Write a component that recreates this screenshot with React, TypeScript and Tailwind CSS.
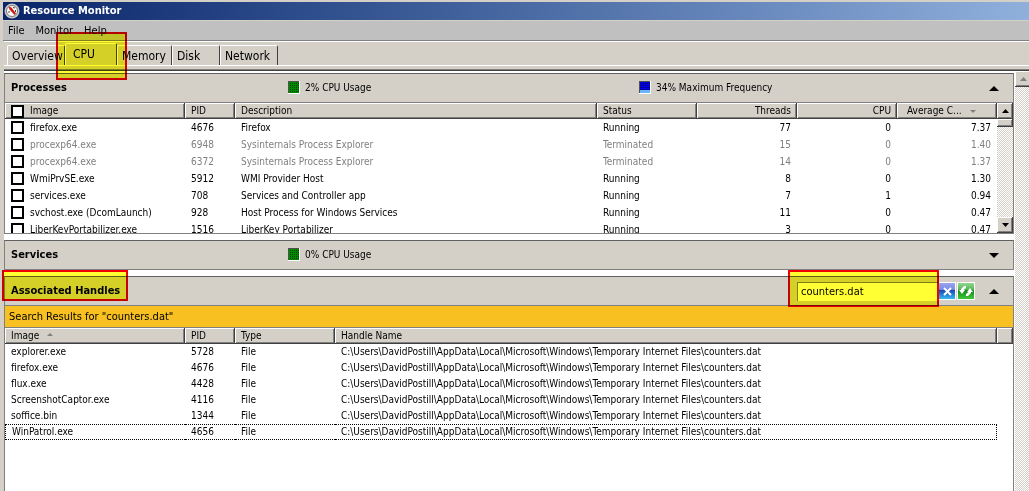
import React, { useState } from "react";

interface ProcessRow {
	image: string;
	pid: number;
	description: string;
	status: "Running" | "Terminated";
	threads: number;
	cpu: number;
	average: string;
}

interface HandleRow {
	image: string;
	pid: number;
}

const processes: ProcessRow[] = [
	{ image: "firefox.exe", pid: 4676, description: "Firefox", status: "Running", threads: 77, cpu: 0, average: "7.37" },
	{ image: "procexp64.exe", pid: 6948, description: "Sysinternals Process Explorer", status: "Terminated", threads: 15, cpu: 0, average: "1.40" },
	{ image: "procexp64.exe", pid: 6372, description: "Sysinternals Process Explorer", status: "Terminated", threads: 14, cpu: 0, average: "1.37" },
	{ image: "WmiPrvSE.exe", pid: 5912, description: "WMI Provider Host", status: "Running", threads: 8, cpu: 0, average: "1.30" },
	{ image: "services.exe", pid: 708, description: "Services and Controller app", status: "Running", threads: 7, cpu: 1, average: "0.94" },
	{ image: "svchost.exe (DcomLaunch)", pid: 928, description: "Host Process for Windows Services", status: "Running", threads: 11, cpu: 0, average: "0.47" },
	{ image: "LiberKeyPortabilizer.exe", pid: 1516, description: "LiberKey Portabilizer", status: "Running", threads: 3, cpu: 0, average: "0.47" },
];

const handles: HandleRow[] = [
	{ image: "explorer.exe", pid: 5728 },
	{ image: "firefox.exe", pid: 4676 },
	{ image: "flux.exe", pid: 4428 },
	{ image: "ScreenshotCaptor.exe", pid: 4116 },
	{ image: "soffice.bin", pid: 1344 },
	{ image: "WinPatrol.exe", pid: 4656 },
];

const handleName =
	"C:\\Users\\DavidPostill\\AppData\\Local\\Microsoft\\Windows\\Temporary Internet Files\\counters.dat";

const tabs = [
	{ name: "Overview", width: "w-[58px]" },
	{ name: "CPU", width: "w-[52px]" },
	{ name: "Memory", width: "w-[55px]" },
	{ name: "Disk", width: "w-[48px]" },
	{ name: "Network", width: "w-[58px]" },
];

const raised =
	"bg-[#d4d0c8] shadow-[inset_-1px_-1px_#404040,inset_1px_1px_#fff,inset_-2px_-2px_#808080]";
const headerCell =
	"h-4 truncate px-1.5 py-0 text-left font-normal leading-4 bg-[#d4d0c8] shadow-[inset_-1px_-1px_#404040,inset_1px_1px_#fff,inset_-2px_-2px_#808080]";
const headerCellRight =
	"h-4 truncate px-1.5 py-0 text-right font-normal leading-4 bg-[#d4d0c8] shadow-[inset_-1px_-1px_#404040,inset_1px_1px_#fff,inset_-2px_-2px_#808080]";
const dither =
	"bg-[repeating-conic-gradient(#d4d0c8_0_25%,#fff_0_50%)] bg-[length:2px_2px]";
const checkbox =
	"block size-[13px] shrink-0 appearance-none border-2 border-black bg-white checked:bg-black";

// Yellow marker with a red frame, laid over the thing it points at
const Marker = ({ className }: { className: string }) => (
	<span
		className={`pointer-events-none absolute z-10 border-2 border-[#f00000] bg-[#ffff33] mix-blend-multiply ${className}`}
	/>
);

const Triangle = ({ down, className = "" }: { down?: boolean; className?: string }) => (
	<svg viewBox="0 0 10 5" className={className} fill="currentColor" preserveAspectRatio="none" aria-hidden="true">
		<path d={down ? "M0 0h10L5 5z" : "M0 5h10L5 0z"} />
	</svg>
);

const Meter = ({ kind, children }: { kind: "usage" | "frequency"; children: React.ReactNode }) => (
	<div className="flex w-[351px] items-center gap-[5px] last:w-auto">
		<svg viewBox="0 0 12 14" className="h-[14px] w-3" shapeRendering="crispEdges" aria-hidden="true">
			<path d="M0 0h12v13H0z" fill="#fff" />
			<path d="M0 0h11v12H0z" fill={kind === "usage" ? "#008a00" : "#0000e0"} />
			<path
				d="M2 2.5h9M2 4.5h9M2 6.5h9M2 8.5h9M2 10.5h9"
				stroke="#000"
				strokeOpacity=".5"
				strokeDasharray="1 1"
			/>
			{kind === "frequency" && <path d="M0 9h11v3H0z" fill="#6ab4f8" />}
			<path d="M0 0h11v1H1v11H0z" fill="#505050" />
		</svg>
		<span>{children}</span>
	</div>
);

interface PanelProps {
	title: string;
	open?: boolean;
	marked?: boolean;
	className?: string;
	summary?: React.ReactNode;
	tools?: React.ReactNode;
	children?: React.ReactNode;
}

const Panel = ({ title, open, marked, className = "", summary, tools, children }: PanelProps) => (
	<section className={`border border-[#808080] border-t-[#606060] ${className}`}>
		<header className="flex h-7 items-center justify-between bg-[#d4d0c8] pr-[13px] pl-1.5">
			<div className="flex items-center">
				<div className="w-[277px]">
					<h2 className="relative inline-block text-[11px] font-bold">
						{title}
						{marked && <Marker className="-top-[13px] -right-2 -bottom-[2px] -left-[9px]" />}
					</h2>
				</div>
				{summary}
			</div>
			<div className="flex items-center gap-[13px]">
				{tools}
				<button type="button" aria-label={`Toggle ${title}`} className="flex h-5 w-3 items-center justify-center">
					<Triangle down={!open} className="h-[5px] w-[10px]" />
				</button>
			</div>
		</header>
		{children}
	</section>
);

const ProcessTable = () => (
	<div className="flex h-[131px] overflow-hidden border-t border-[#808080]">
		<table className="w-full table-fixed self-start border-separate border-spacing-0">
			<colgroup>
				<col className="w-[180px]" />
				<col className="w-[50px]" />
				<col />
				<col className="w-[100px]" />
				<col className="w-[100px]" />
				<col className="w-[100px]" />
				<col className="w-[100px]" />
			</colgroup>
			<thead>
				<tr>
					<th className={headerCell}>
						<label className="flex items-center gap-1.5">
							<input type="checkbox" className={checkbox} />
							Image
						</label>
					</th>
					<th className={headerCell}>PID</th>
					<th className={headerCell}>Description</th>
					<th className={headerCell}>Status</th>
					<th className={headerCellRight}>Threads</th>
					<th className={headerCellRight}>CPU</th>
					<th className={headerCell}>
						<span className="flex items-center gap-2 pl-1">
							Average C...
							<Triangle down className="h-[3px] w-1.5 text-[#808080]" />
						</span>
					</th>
				</tr>
			</thead>
			<tbody>
				{processes.map((row) => (
					<tr
						key={row.pid}
						className={row.status === "Terminated" ? "h-[17px] text-[#808080]" : "h-[17px]"}
					>
						<td className="px-1.5 py-0">
							<label className="flex items-center gap-1.5">
								<input type="checkbox" className={checkbox} />
								<span className="whitespace-nowrap">{row.image}</span>
							</label>
						</td>
						<td className="px-1.5 py-0">{row.pid}</td>
						<td className="px-1.5 py-0">{row.description}</td>
						<td className="px-1.5 py-0">{row.status}</td>
						<td className="px-1.5 py-0 text-right">{row.threads}</td>
						<td className="px-1.5 py-0 text-right">{row.cpu}</td>
						<td className="px-1.5 py-0 text-right">{row.average}</td>
					</tr>
				))}
			</tbody>
		</table>
		<div className={`flex w-4 shrink-0 flex-col ${dither}`}>
			<button type="button" aria-label="Scroll up" className={`flex h-4 items-center justify-center ${raised}`}>
				<Triangle className="h-1 w-[7px]" />
			</button>
			<div className={`h-2 ${raised}`} />
			<button type="button" aria-label="Scroll down" className={`mt-auto flex h-4 items-center justify-center ${raised}`}>
				<Triangle down className="h-1 w-[7px]" />
			</button>
		</div>
	</div>
);

const HandleTable = () => (
	<table className="w-full table-fixed border-separate border-spacing-0">
		<colgroup>
			<col className="w-[180px]" />
			<col className="w-[50px]" />
			<col className="w-[100px]" />
			<col />
			<col className="w-4" />
		</colgroup>
		<thead>
			<tr>
				<th className={headerCell}>
					<span className="flex items-center gap-2">
						Image
						<Triangle className="mb-1 h-[3px] w-1.5 text-[#808080]" />
					</span>
				</th>
				<th className={headerCell}>PID</th>
				<th className={headerCell}>Type</th>
				<th className={headerCell}>Handle Name</th>
				<td className={headerCell} />
			</tr>
		</thead>
		<tbody>
			{handles.map((row, i) => {
				const cell =
					i === handles.length - 1
						? "border-y border-dotted border-black px-1.5 py-0 leading-[14px] whitespace-nowrap first:border-l last:border-r"
						: "px-1.5 py-0 leading-4 whitespace-nowrap";

				return (
					<tr key={row.pid}>
						<td className={cell}>{row.image}</td>
						<td className={cell}>{row.pid}</td>
						<td className={cell}>File</td>
						<td className={cell}>{handleName}</td>
					</tr>
				);
			})}
		</tbody>
	</table>
);

const HandleSearch = () => {
	const [query, setQuery] = useState("counters.dat");

	return (
		<div className="flex items-center">
			<div className="relative">
				<input
					type="text"
					aria-label="Search handles"
					value={query}
					onChange={(e) => setQuery(e.target.value)}
					className="block h-[19px] w-[142px] border-t border-l border-[#808080] bg-white px-[3px] text-[11px] outline-none"
				/>
				<Marker className="-top-3 right-0 -bottom-[6px] -left-[9px]" />
			</div>
			<button type="button" aria-label="Clear search" onClick={() => setQuery("")}>
				<svg viewBox="0 0 17 18" className="h-[18px] w-[17px]">
					<defs>
						<linearGradient id="clear" x2="0" y2="1">
							<stop offset="0" stopColor="#9aa4ee" />
							<stop offset=".4" stopColor="#7a8ce4" />
							<stop offset=".45" stopColor="#1848b8" />
							<stop offset="1" stopColor="#38b8f0" />
						</linearGradient>
					</defs>
					<path d="M0 0h17v18H0z" fill="#fff" />
					<path d="M0 1h16v16H0z" fill="url(#clear)" />
					<path d="M5 6l7 7M12 6l-7 7" stroke="#fff" strokeWidth="2" />
				</svg>
			</button>
			<button type="button" aria-label="Refresh" className="ml-px">
				<svg viewBox="0 0 18 18" className="size-[18px]">
					<defs>
						<linearGradient id="refresh" x2="0" y2="1">
							<stop offset="0" stopColor="#90d890" />
							<stop offset=".4" stopColor="#58b858" />
							<stop offset=".45" stopColor="#108818" />
							<stop offset="1" stopColor="#40c838" />
						</linearGradient>
					</defs>
					<path d="M0 0h18v18H0z" fill="#fff" />
					<path d="M1 1h16v16H1z" fill="url(#refresh)" />
					<path d="M9 4H7L4 7v1H2l3 4 3-4H6.500L9 6z" fill="#fff" />
					<path d="M9 14h2l3-3v-1h2l-3-4-3 4h1.500L9 12z" fill="#fff" />
				</svg>
			</button>
		</div>
	);
};

const App = () => (
	<div className="flex h-screen flex-col overflow-hidden border-t-2 border-[#d4d0c8] bg-[#d4d0c8] font-['DejaVu_Sans_Condensed','Noto_Sans',sans-serif] text-[10px] leading-4 text-black">
		<div className="ml-[3px] flex h-[18px] shrink-0 items-center gap-[3px] bg-linear-to-r from-[#0a246a] to-[#90b0dc] pl-px text-white">
			<svg viewBox="0 0 16 16" className="size-4" aria-hidden="true">
				<circle cx="8" cy="8" r="7.5" fill="#c8c8c8" />
				<circle cx="8" cy="8" r="5.500" fill="#fff" stroke="#777" strokeWidth="1" />
				<path d="M4.500 3.500l3 1 4.500 6-1.500 1.500-5-5.500z" fill="#d01818" />
				<path d="M5 10V8M9 4.500l2 .5M11.500 7v2" stroke="#444" strokeWidth="1" />
			</svg>
			<h1 className="text-[11px] font-bold">Resource Monitor</h1>
		</div>
		<nav className="mt-px ml-[3px] flex h-5 shrink-0 items-center gap-[11px] border-b border-[#808080] bg-[#c0c0c0] pl-[5px] text-[11px]">
			<button type="button">File</button>
			<button type="button">Monitor</button>
			<button type="button">Help</button>
		</nav>
		<div className="ml-1 shrink-0 border-t border-white">
			<div role="tablist" className="flex h-[23px] items-end pl-[3px] text-[12px]">
				{tabs.map(({ name, width }) => (
					<button
						key={name}
						type="button"
						role="tab"
						aria-selected={name === "CPU"}
						className={`rounded-t-xs border-t border-r border-l border-white border-r-[#404040] text-left whitespace-nowrap ${width} ${
							name === "CPU" ? "relative h-[22px] pb-0.5 pl-[7px]" : "h-5 pl-1"
						}`}
					>
						{name}
						{name === "CPU" && <Marker className="-top-3 -right-[11px] -bottom-[15px] -left-[10px]" />}
					</button>
				))}
			</div>
			<div className="h-1 border-t border-white" />
			<div className="h-0.5 border-t border-[#808080] bg-[#404040]" />
		</div>
		<main className="ml-1 flex min-h-0 flex-1 gap-px bg-white">
			<div className="flex min-w-0 flex-1 flex-col gap-1.5 pt-0.5">
				<Panel
					title="Processes"
					open
					summary={
						<>
							<Meter kind="usage">2% CPU Usage</Meter>
							<Meter kind="frequency">34% Maximum Frequency</Meter>
						</>
					}
				>
					<ProcessTable />
				</Panel>
				<Panel title="Services" summary={<Meter kind="usage">0% CPU Usage</Meter>} />
				<Panel title="Associated Handles" open marked className="flex-1 border-b-0" tools={<HandleSearch />}>
					<p className="h-[23px] border-t border-b border-[#808080] bg-[#f8c020] px-1 text-[11px] leading-[22px]">
						Search Results for "counters.dat"
					</p>
					<HandleTable />
				</Panel>
			</div>
			<div className={`w-[14px] shrink-0 overflow-hidden ${dither}`}>
				<button type="button" aria-label="Scroll page up" className={`flex h-4 w-4 items-center justify-center ${raised}`}>
					<Triangle className="h-1 w-[7px] text-[#808080]" />
				</button>
			</div>
		</main>
	</div>
);

export default App;
